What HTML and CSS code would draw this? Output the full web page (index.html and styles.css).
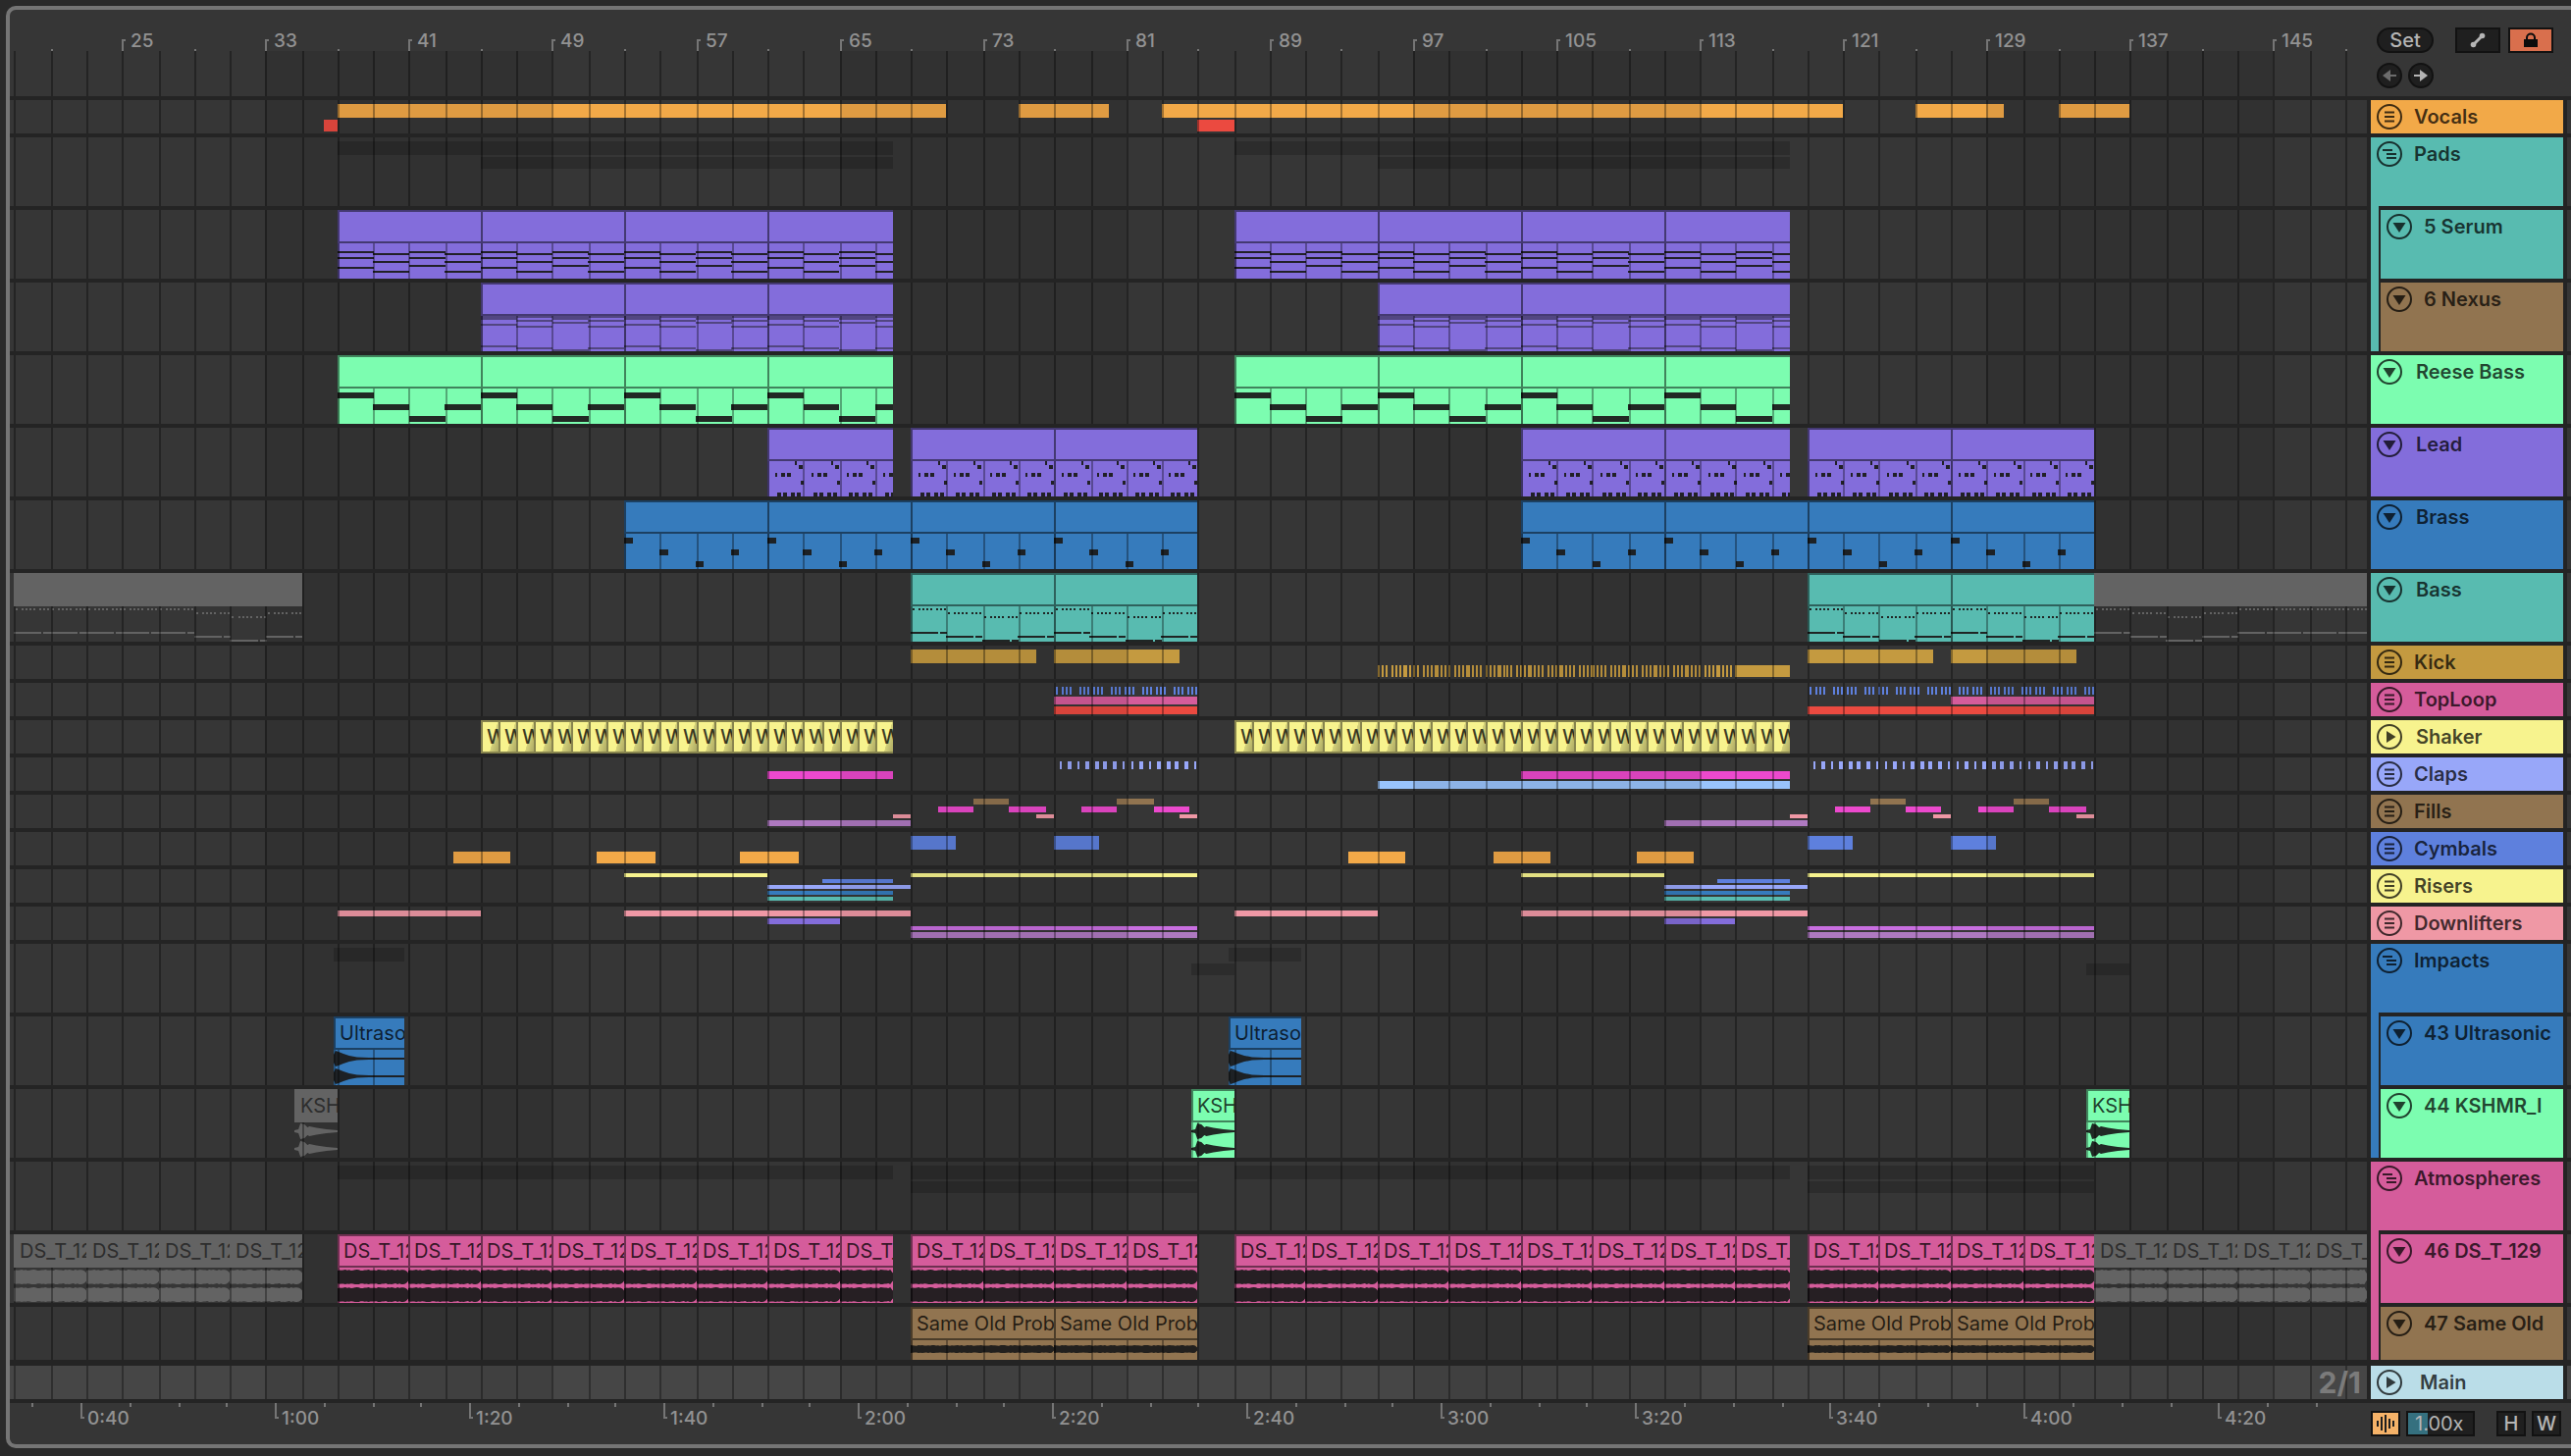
FILE: index.html
```
<!DOCTYPE html>
<html lang="en">
<head>
  <meta charset="UTF-8">
  <meta name="viewport" content="width=device-width, initial-scale=1.0">
  <title>Arrangement View</title>
  <link rel="stylesheet" href="styles.css">
</head>
<body>
  <svg class="symbols" aria-hidden="true">
    <symbol id="i-list" viewBox="0 0 26 26"><path d="M8 8.500h10M8 13h10M8 17.500h10" stroke="currentColor" stroke-width="2"/></symbol>
    <symbol id="i-group" viewBox="0 0 26 26"><path d="M6 9h10M10 13h10M10 17h10" stroke="currentColor" stroke-width="2"/></symbol>
    <symbol id="i-down" viewBox="0 0 26 26"><path d="M6.500 9h13L13 19z" fill="currentColor"/></symbol>
    <symbol id="i-play" viewBox="0 0 26 26"><path d="M10 7v12l9.500-6z" fill="currentColor"/></symbol>
  </svg>

  <main class="panel">
    <section class="timeline">
      <div class="bar-ruler" id="barRuler"></div>
      <div class="stage" id="stage">
        <div class="scrub"></div>
        <div class="sep"></div>
      </div>
      <div class="time-ruler" id="timeRuler"></div>
    </section>

    <aside class="headers">
      <div class="toolbar">
        <div class="tool-row">
          <button class="pill" type="button">Set</button>
          <span class="tool-pair">
            <button class="tool" type="button" aria-label="Automation mode">
              <svg width="16" height="16" viewBox="0 0 16 16"><path d="M4 12l8-8" stroke="currentColor" stroke-width="3"/><circle cx="3.500" cy="12.500" r="2.800" fill="currentColor"/><circle cx="12.500" cy="3.500" r="2.800" fill="currentColor"/></svg>
            </button>
            <button class="tool lock" type="button" aria-label="Lock envelopes">
              <svg width="14" height="16" viewBox="0 0 14 16"><path d="M0 7h14v8H0z" fill="currentColor"/><path d="M3 8V5.500a4 4 0 0 1 8 0V8" fill="none" stroke="currentColor" stroke-width="2"/></svg>
            </button>
          </span>
        </div>
        <div class="tool-row arrows">
          <button class="round off" type="button" aria-label="Previous locator">
            <svg width="22" height="22" viewBox="0 0 22 22"><path d="M4 11l8-6v12z" fill="currentColor"/><path d="M11 11h7" stroke="currentColor" stroke-width="2"/></svg>
          </button>
          <button class="round" type="button" aria-label="Next locator">
            <svg width="22" height="22" viewBox="0 0 22 22"><path d="M18 11l-8-6v12z" fill="currentColor"/><path d="M4 11h7" stroke="currentColor" stroke-width="2"/></svg>
          </button>
        </div>
      </div>

      <div class="track orange"><button class="fold" type="button" aria-label="Unfold Vocals"><svg><use href="#i-list"/></svg></button><span>Vocals</span></div>

      <div class="group teal">
        <div class="track tall teal"><button class="fold" type="button" aria-label="Fold Pads"><svg><use href="#i-group"/></svg></button><span>Pads</span></div>
        <div class="children">
          <div class="track tall teal"><button class="fold" type="button" aria-label="Fold Serum"><svg><use href="#i-down"/></svg></button><span>5 Serum</span></div>
          <div class="track tall brown"><button class="fold" type="button" aria-label="Fold Nexus"><svg><use href="#i-down"/></svg></button><span>6 Nexus</span></div>
        </div>
      </div>

      <div class="track tall green wide"><button class="fold" type="button" aria-label="Fold Reese Bass"><svg><use href="#i-down"/></svg></button><span>Reese Bass</span></div>
      <div class="track tall purple wide"><button class="fold" type="button" aria-label="Fold Lead"><svg><use href="#i-down"/></svg></button><span>Lead</span></div>
      <div class="track tall blue wide"><button class="fold" type="button" aria-label="Fold Brass"><svg><use href="#i-down"/></svg></button><span>Brass</span></div>
      <div class="track tall teal wide"><button class="fold" type="button" aria-label="Fold Bass"><svg><use href="#i-down"/></svg></button><span>Bass</span></div>
      <div class="track gold"><button class="fold" type="button" aria-label="Unfold Kick"><svg><use href="#i-list"/></svg></button><span>Kick</span></div>
      <div class="track pink"><button class="fold" type="button" aria-label="Unfold TopLoop"><svg><use href="#i-list"/></svg></button><span>TopLoop</span></div>
      <div class="track yellow wide"><button class="fold" type="button" aria-label="Unfold Shaker"><svg><use href="#i-play"/></svg></button><span>Shaker</span></div>
      <div class="track peri"><button class="fold" type="button" aria-label="Unfold Claps"><svg><use href="#i-list"/></svg></button><span>Claps</span></div>
      <div class="track brown"><button class="fold" type="button" aria-label="Unfold Fills"><svg><use href="#i-list"/></svg></button><span>Fills</span></div>
      <div class="track royal"><button class="fold" type="button" aria-label="Unfold Cymbals"><svg><use href="#i-list"/></svg></button><span>Cymbals</span></div>
      <div class="track yellow"><button class="fold" type="button" aria-label="Unfold Risers"><svg><use href="#i-list"/></svg></button><span>Risers</span></div>
      <div class="track rose"><button class="fold" type="button" aria-label="Unfold Downlifters"><svg><use href="#i-list"/></svg></button><span>Downlifters</span></div>

      <div class="group blue">
        <div class="track tall blue"><button class="fold" type="button" aria-label="Fold Impacts"><svg><use href="#i-group"/></svg></button><span>Impacts</span></div>
        <div class="children">
          <div class="track tall blue"><button class="fold" type="button" aria-label="Fold Ultrasonic"><svg><use href="#i-down"/></svg></button><span>43 Ultrasonic</span></div>
          <div class="track tall green"><button class="fold" type="button" aria-label="Fold KSHMR"><svg><use href="#i-down"/></svg></button><span>44 KSHMR_I</span></div>
        </div>
      </div>

      <div class="group pink">
        <div class="track tall pink"><button class="fold" type="button" aria-label="Fold Atmospheres"><svg><use href="#i-group"/></svg></button><span>Atmospheres</span></div>
        <div class="children">
          <div class="track tall pink"><button class="fold" type="button" aria-label="Fold DS_T_129"><svg><use href="#i-down"/></svg></button><span>46 DS_T_129</span></div>
          <div class="track mid brown"><button class="fold" type="button" aria-label="Fold Same Old"><svg><use href="#i-down"/></svg></button><span>47 Same Old</span></div>
        </div>
      </div>

      <div class="track master"><button class="fold" type="button" aria-label="Unfold Main"><svg><use href="#i-play"/></svg></button><span>Main</span></div>

      <div class="footer">
        <button class="small wave" type="button" aria-label="Waveform zoom">
          <svg width="20" height="20" viewBox="0 0 20 20"><path d="M2 7v6M6 3v14M10 1v18M14 5v10M18 7v6" stroke="currentColor" stroke-width="2"/></svg>
        </button>
        <input class="zoom" type="text" value="1.00x" aria-label="Vertical zoom">
        <button class="small fit-h" type="button">H</button>
        <button class="small" type="button">W</button>
      </div>
    </aside>

    <div class="edge" id="edge"></div>
  </main>
  <script src="script.js"></script>
</body>
</html>
```
FILE: styles.css
```
* {
  box-sizing: border-box;
}

body {
  margin: 0;
  background: #2a2a2a;
  color: #b5b5b5;
  font-family: Inter, "Liberation Sans", sans-serif;
  font-size: 20px;
  line-height: 26px;
}

button,
input {
  font: inherit;
  color: inherit;
  padding: 0;
  margin: 0;
}

.symbols {
  display: none;
}

.panel {
  display: flex;
  margin: 6px 0 8px 6px;
  border: 4px solid #757575;
  border-right: 0;
  border-radius: 10px 0 0 10px;
  background: #363636;
  overflow: hidden;
}

/* colours */
.orange { --c: #f2a948; }
.red { --c: #eb4a40; }
.teal { --c: #58bbb0; }
.brown { --c: #917450; }
.green { --c: #7cfdb0; }
.purple { --c: #836ddb; }
.blue { --c: #367bbc; }
.gold { --c: #c49a40; }
.pink { --c: #d55c9b; }
.yellow { --c: #f7f38e; }
.peri { --c: #98a7f9; }
.royal { --c: #5e80dd; }
.rose { --c: #ef98a5; }
.magenta { --c: #ec49cd; }
.sky { --c: #99c3fb; }
.mauve { --c: #ae79c0; }
.orchid { --c: #c96fe1; }
.master { --c: #badde8; }

/* timeline */
.timeline {
  flex: 1;
  min-width: 0;
}

.bar-ruler,
.time-ruler {
  position: relative;
  height: 42px;
  overflow: hidden;
  color: #929292;
  font-size: 19px;
  font-weight: 500;
}

.stage {
  position: relative;
  overflow: hidden;
  isolation: isolate;
}

.scrub {
  height: 46px;
}

.sep {
  position: relative;
  z-index: 6;
  height: 4px;
  background: #242424;
}

.sep.thick {
  height: 6px;
}

.lane {
  position: relative;
  height: 34px;
  overflow: hidden;
}

.lane.tall {
  height: 70px;
}

.lane.mid {
  height: 54px;
}

.lane.main {
  display: flex;
  align-items: center;
  justify-content: flex-end;
  padding-right: 6px;
  background: #464646;
}

.lane.main output {
  position: relative;
  z-index: 5;
  font-size: 30px;
  font-weight: 700;
  line-height: 30px;
  color: #7b7b7b;
}

/* everything placed by bar number */
.at {
  position: absolute;
  left: calc((var(--start) - 18.732) / 131.472 * 100%);
  left: round(nearest, calc((var(--start) - 18.732) / 131.472 * 100%), 2px);
}

.span {
  right: calc(100% - (var(--end) - 18.732) / 131.472 * 100%);
  right: calc(100% - round(nearest, calc((var(--end) - 18.732) / 131.472 * 100%), 2px));
}

.line {
  top: 0;
  bottom: 0;
  width: 2px;
  z-index: 3;
  background: rgba(0, 0, 0, 0.33);
}

.shade {
  top: 0;
  bottom: 0;
  z-index: 1;
  background: rgba(0, 0, 0, 0.08);
}

.tick {
  bottom: 0;
  width: 2px;
  height: 2px;
  background: #757575;
}

.tick.major {
  width: 4px;
  height: 12px;
  background: none;
  border-left: 2px solid #757575;
  border-top: 2px solid #757575;
}

.tick span {
  position: absolute;
  left: 7px;
  bottom: -3px;
}

.time-ruler .tick {
  top: 0;
  bottom: auto;
  height: 4px;
}

.time-ruler .tick.major {
  height: 16px;
  border-top: 0;
  border-bottom: 2px solid #757575;
}

.time-ruler .tick span {
  left: 5px;
  top: 3px;
  bottom: auto;
}

/* overview bars of folded tracks */
.mini {
  top: calc(var(--y) * 1px);
  height: calc(var(--h) * 1px);
  background: var(--c);
}

.ghost {
  background: rgba(0, 0, 0, 0.18);
}

.mini-notes {
  display: block;
  width: 100%;
  height: 100%;
  fill: var(--c);
}

.mini.ticks {
  background: none;
}

/* full clips */
.clip-body {
  top: 34px;
  bottom: 0;
  z-index: 2;
  background: var(--c);
  overflow: hidden;
}

.clip-body svg {
  display: block;
  width: 100%;
  height: 100%;
  fill: color-mix(in srgb, var(--c) 6%, #1b1b1b);
}

.clip-body.soft svg {
  fill: #524681;
}

.clip-head {
  top: 0;
  height: 34px;
  z-index: 4;
  overflow: hidden;
  white-space: nowrap;
  padding-left: 4px;
  line-height: 31px;
  color: rgba(0, 0, 0, 0.76);
  background: var(--c);
  border: 2px solid rgba(0, 0, 0, 0.48);
  border-right: 0;
}

.clip-edge {
  top: 34px;
  bottom: 0;
  z-index: 4;
  width: 2px;
  background: rgba(0, 0, 0, 0.3);
}

.clip-head.gray {
  border: 0;
  padding-left: 6px;
  line-height: 35px;
  background: #636363;
  color: #2d2d2d;
}

.clip-body.gray {
  background: none;
}

.clip-body.gray svg {
  fill: #636363;
}

.clip-head.hit {
  padding-left: 4px;
  line-height: 30px;
  font-weight: 500;
  border-color: #87844e;
  background: linear-gradient(105deg, transparent 62%, rgba(0, 0, 0, 0.14) 64%, rgba(0, 0, 0, 0.3)) var(--c);
}

/* track headers */
.headers {
  flex: none;
  width: 204px;
  padding-left: 4px;
  border-right: 4px solid #242424;
  background: #242424;
}

.toolbar {
  height: 88px;
  margin: 0 -4px 4px;
  padding: 18px 14px 0 10px;
  background: #363636;
}

.tool-row,
.tool-pair {
  display: flex;
  justify-content: space-between;
  gap: 8px;
}

.tool-row.arrows {
  justify-content: flex-start;
  gap: 6px;
  margin-top: 10px;
}

.pill,
.tool,
.round,
.small,
.zoom {
  display: flex;
  align-items: center;
  justify-content: center;
  height: 26px;
  border: 2px solid #121212;
  background: #1f1f1f;
  line-height: 22px;
}

.pill {
  width: 58px;
  border-radius: 13px;
  font-weight: 500;
}

.tool {
  width: 46px;
}

.tool.lock {
  background: #d96f4d;
  color: #0c0c0c;
}

.round {
  width: 26px;
  border-radius: 50%;
}

.round svg {
  flex: none;
}

.round.off {
  color: #6c6c6c;
}

.track {
  display: flex;
  align-items: flex-start;
  gap: 12px;
  height: 34px;
  margin-bottom: 4px;
  padding: 4px 0 0 6px;
  overflow: hidden;
  white-space: nowrap;
  background: var(--c);
  color: rgba(0, 0, 0, 0.74);
  font-weight: 600;
}

.track.wide {
  gap: 14px;
}

.track.tall {
  height: 70px;
}

.track.mid {
  height: 54px;
}

.fold {
  flex: none;
  width: 26px;
  height: 26px;
  border: 2px solid currentColor;
  border-radius: 50%;
  background: none;
}

.fold svg {
  display: block;
  width: 26px;
  height: 26px;
  margin: -2px;
}

.group {
  margin-bottom: 4px;
  background: var(--c);
}

.group > .track {
  margin: 0;
}

.children {
  margin-left: 8px;
  padding: 4px 0 0 2px;
  background: #242424;
}

.children .track:last-child {
  margin-bottom: 0;
}

.master {
  margin-top: 6px;
  gap: 18px;
}

.footer {
  display: flex;
  height: 42px;
  margin: 0 -4px;
  padding: 8px 6px 0 4px;
  background: #363636;
}

.small {
  width: 30px;
  margin-left: 6px;
  font-weight: 500;
}

.small.wave {
  margin-left: 0;
  background: #f5b268;
  color: #1f1f1f;
}

.small svg {
  flex: none;
}

.small.fit-h {
  margin-left: auto;
}

.zoom {
  width: 70px;
  margin-left: 6px;
  padding-left: 7px;
  border-radius: 0;
  background: linear-gradient(to right, #35707f 20px, #1f1f1f 20px);
}

.edge {
  flex: none;
  width: 4px;
  padding-top: 88px;
}
```
FILE: script.js
```
const stage = document.getElementById('stage');
const edge = document.getElementById('edge');
const LAST = 150.204; // bar at the right end of the view
const BAR = 18.27;

function el(parent, className, vars, text) {
  const node = document.createElement('div');
  node.className = className;
  for (const key in vars) node.style.setProperty('--' + key, vars[key]);
  if (text) node.textContent = text;
  parent.appendChild(node);
  return node;
}

// splits [from, to] into clips of `len` bars
function split(from, to, len) {
  const out = [];
  for (let b = from; b < to; b += len) out.push([b, Math.min(b + len, to)]);
  return out;
}

function svg(w, h, inner) {
  return `<svg viewBox="0 0 ${w} ${h}" preserveAspectRatio="none">${inner}</svg>`;
}

// ---- notes, one list per two-bar segment: [x, y, w, h] ----
const full = 2 * BAR;
const rows = (ys, h) => ys.map(y => [0, y, full, h]);
const lead = [[28, 0, 2, 4], [32, 4, 4, 4], [8, 12, 2, 4], [14, 12, 4, 4], [20, 12, 4, 4], [34, 20, 3, 4],
  [10, 32, 4, 4], [16, 32, 4, 4], [24, 32, 4, 4], [30, 32, 4, 4]];
const bass = y => [2, 8, 12, 16, 20, 26, 30, 34].map(x => [x, y, 2, 2])
  .concat([[0, y + 24, 28, 2], [30, y + 24, 7, 2]]);

const NOTES = {
  serum: [rows([8, 14, 24], 2), rows([10, 18, 28], 2), rows([8, 14, 22], 2), rows([10, 18, 28], 2)],
  nexus: [rows([0, 2, 8, 30], 2), rows([0, 4, 10, 32], 2), rows([0, 2, 6, 34], 2), rows([0, 4, 10, 32], 2)],
  reese: [rows([4], 6), rows([16], 6), rows([28], 6), rows([16], 6)],
  lead: [lead, lead, lead, lead],
  brass: [[[0, 4, 9, 6]], [[0, 16, 9, 6]], [[0, 28, 8, 6]], [[0, 16, 8, 6]]],
  bass: [bass(2), bass(6), bass(10), bass(6)],
  bassIntro: [bass(2), bass(2), bass(2), bass(2), bass(2), bass(6), bass(10), bass(6)],
  bassOutro: [bass(2), bass(6), bass(10), bass(6), bass(2), bass(2), bass(2), bass(2)]
};

function notes(kind, start, end) {
  const segs = NOTES[kind];
  let inner = '';
  for (let i = 0; i * 2 < end - start; i++) {
    for (const [x, y, w, h] of segs[i % segs.length]) {
      inner += `<rect x="${(i * full + x).toFixed(1)}" y="${y}" width="${w}" height="${h}"/>`;
    }
  }
  return svg((end - start) * BAR, 36, `<g shape-rendering="crispEdges">${inner}</g>`);
}

// ---- audio shapes ----
function band(mid, amp, w, jitter, seed) {
  let top = '', bottom = '';
  for (let x = 0; x <= w + 2; x += 2) {
    const fade = Math.max(0.4, Math.min(1, (w - x) / 3 + 0.4));
    const n = Math.abs(Math.sin(x * 0.9 + seed) + Math.sin(x * 0.37 + seed * 2)) * jitter;
    top += `${x},${(mid - (amp - n) * fade).toFixed(1)} `;
    bottom = `${x},${(mid + (amp - n * 0.8) * fade).toFixed(1)} ` + bottom;
  }
  return `<polygon points="${top}${bottom}"/>`;
}

function decay(mid, points) {
  const up = points.map(([x, a]) => `${x},${mid - a}`).join(' ');
  const down = points.slice().reverse().map(([x, a]) => `${x},${mid + a}`).join(' ');
  return `<polygon points="${up} ${down}"/>`;
}

const WAVES = {
  drone: w => svg(w, 36, band(9.500, 7.500, w, 0.6, 1) + band(27.500, 7.500, w, 0.6, 1)),
  old: w => svg(w, 20, band(9, 4, w, 0.4, 3)),
  sonic: w => {
    const p = [[0, 4], [2, 8], [5, 7], [10, 5], [16, 3], [24, 1.5], [36, 1], [w, 1]];
    return svg(w, 36, decay(9, p) + decay(27, p));
  },
  kshmr: w => {
    const p = [[0, 1], [4, 2], [6, 8], [10, 7], [13, 4], [15, 5], [22, 3.5], [32, 2], [w, 1]];
    return svg(w, 36, decay(9, p) + decay(27, p));
  }
};

function clip(lane, color, [start, end], kind, title) {
  const pos = { start, end };
  const body = el(lane, `at span clip-body ${color}${kind === 'nexus' ? ' soft' : ''}`, pos);
  body.innerHTML = NOTES[kind] ? notes(kind, start, end) : WAVES[kind]((end - start) * BAR);
  el(lane, `at span clip-head ${color}`, pos, title);
  if (color !== 'gray') el(lane, 'at clip-edge', { start });
}

function mini(lane, color, y, h, ranges) {
  for (const [start, end] of ranges) el(lane, `at span mini ${color}`, { start, end, y, h });
}

// short repeated hits drawn inside one range, pattern in pixels
function hits(lane, color, y, h, [start, end], period, pattern) {
  const w = (end - start) * BAR;
  let inner = '';
  for (let x = 0; x < w; x += period) {
    for (const [dx, dw] of pattern) inner += `<rect x="${x + dx}" y="0" width="${dw}" height="1"/>`;
  }
  const node = el(lane, `at span mini ticks ${color}`, { start, end, y, h });
  node.innerHTML = `<svg class="mini-notes" viewBox="0 0 ${w} 1" preserveAspectRatio="none" shape-rendering="crispEdges">${inner}</svg>`;
}

const kickHits = [[0, 2], [4, 2], [8, 2], [14, 2], [18, 2], [22, 2], [26, 4]];
const topHits = [[2, 2], [8, 2], [12, 2], [16, 2], [26, 2], [30, 2]];
const clapHits = [[6, 2], [14, 4], [24, 2], [32, 4], [42, 4], [50, 4], [60, 4], [70, 2]];

const LANES = [
  ['', lane => { // Vocals
    mini(lane, 'orange', 4, 14, [[37, 71], [75, 80], [83, 121], [125, 130], [133, 137]]);
    mini(lane, 'red', 20, 12, [[36.200, 37], [85, 87]]);
  }],
  ['tall', lane => { // Pads
    mini(lane, 'ghost', 4, 14, [[37, 68], [87, 118]]);
    mini(lane, 'ghost', 20, 12, [[45, 68], [95, 118]]);
  }],
  ['tall', lane => [...split(37, 68, 8), ...split(87, 118, 8)].forEach(r => clip(lane, 'purple', r, 'serum'))],
  ['tall', lane => [...split(45, 68, 8), ...split(95, 118, 8)].forEach(r => clip(lane, 'purple', r, 'nexus'))],
  ['tall', lane => [...split(37, 68, 8), ...split(87, 118, 8)].forEach(r => clip(lane, 'green', r, 'reese'))],
  ['tall', lane => [[61, 68], ...split(69, 85, 8), ...split(103, 118, 8), ...split(119, 135, 8)]
    .forEach(r => clip(lane, 'purple', r, 'lead'))],
  ['tall', lane => [...split(53, 85, 8), ...split(103, 135, 8)].forEach(r => clip(lane, 'blue', r, 'brass'))],
  ['tall', lane => { // Bass
    clip(lane, 'gray', [19, 35], 'bassIntro');
    [...split(69, 85, 8), ...split(119, 135, 8)].forEach(r => clip(lane, 'teal', r, 'bass'));
    clip(lane, 'gray', [135, LAST], 'bassOutro');
  }],
  ['', lane => { // Kick
    mini(lane, 'gold', 4, 14, [[69, 76], [77, 84], [119, 126], [127, 134]]);
    hits(lane, 'gold', 20, 12, [95, 115], 32, kickHits);
    mini(lane, 'gold', 20, 12, [[115, 118]]);
  }],
  ['', lane => { // TopLoop
    hits(lane, 'royal', 4, 8, [77, 85], 32, topHits);
    hits(lane, 'royal', 4, 8, [119, 135], 32, topHits);
    mini(lane, 'pink', 14, 8, [[77, 85], [127, 135]]);
    mini(lane, 'red', 24, 8, [[77, 85], [119, 135]]);
  }],
  ['', lane => [...split(45, 68, 1), ...split(87, 118, 1)] // Shaker
    .forEach(([start, end]) => el(lane, 'at span clip-head hit yellow', { start, end }, 'W'))],
  ['', lane => { // Claps
    hits(lane, 'peri', 4, 8, [77, 85], 73, clapHits);
    hits(lane, 'peri', 4, 8, [119, 135], 73, clapHits);
    mini(lane, 'magenta', 14, 8, [[61, 68], [103, 118]]);
    mini(lane, 'sky', 24, 8, [[95, 118]]);
  }],
  ['', lane => { // Fills
    for (const b of [69, 77, 119, 127]) {
      mini(lane, 'magenta', 12, 6, [[b + 1.500, b + 3.500], [b + 5.500, b + 7.500]]);
      mini(lane, 'brown', 4, 6, [[b + 3.500, b + 5.500]]);
      mini(lane, 'rose', 20, 4, [[b + 7, b + 8]]);
    }
    mini(lane, 'rose', 20, 4, [[68, 69], [118, 119]]);
    mini(lane, 'mauve', 26, 6, [[61, 69], [111, 119]]);
  }],
  ['', lane => { // Cymbals
    mini(lane, 'royal', 4, 14, [[69, 71.500], [77, 79.500], [119, 121.500], [127, 129.500]]);
    mini(lane, 'orange', 20, 12, [43.500, 51.500, 59.500, 93.400, 101.500, 109.500].map(b => [b, b + 3.200]));
  }],
  ['', lane => { // Risers
    mini(lane, 'yellow', 4, 4, [[53, 61], [69, 85], [103, 111], [119, 135]]);
    mini(lane, 'royal', 10, 4, [[64, 68], [114, 118]]);
    mini(lane, 'peri', 16, 4, [[61, 69], [111, 119]]);
    mini(lane, 'blue', 22, 4, [[61, 68], [111, 118]]);
    mini(lane, 'teal', 28, 4, [[61, 68], [111, 118]]);
  }],
  ['', lane => { // Downlifters
    mini(lane, 'rose', 4, 6, [[37, 45], [53, 69], [87, 95], [103, 119]]);
    mini(lane, 'purple', 12, 6, [[61, 65], [111, 115]]);
    mini(lane, 'orchid', 20, 4, [[69, 85], [119, 135]]);
    mini(lane, 'mauve', 26, 6, [[69, 85], [119, 135]]);
  }],
  ['tall', lane => { // Impacts
    mini(lane, 'ghost', 4, 14, [[36.780, 40.750], [86.700, 90.750]]);
    mini(lane, 'ghost', 20, 12, [[84.600, 87], [134.600, 137]]);
  }],
  ['tall', lane => [[36.780, 40.750], [86.700, 90.750]].forEach(r => clip(lane, 'blue', r, 'sonic', 'Ultrasonic'))],
  ['tall', lane => {
    clip(lane, 'gray', [34.650, 37], 'kshmr', 'KSHMR');
    clip(lane, 'green', [84.650, 87], 'kshmr', 'KSHMR');
    clip(lane, 'green', [134.600, 137], 'kshmr', 'KSHMR');
  }],
  ['tall', lane => { // Atmospheres
    mini(lane, 'ghost', 4, 14, [[37, 68], [69, 85], [87, 118], [119, 135]]);
    mini(lane, 'ghost', 20, 12, [[69, 85], [119, 135]]);
  }],
  ['tall', lane => {
    split(19, 35, 4).forEach(r => clip(lane, 'gray', r, 'drone', 'DS_T_129'));
    [...split(37, 68, 4), ...split(69, 85, 4), ...split(87, 118, 4), ...split(119, 135, 4)]
      .forEach(r => clip(lane, 'pink', r, 'drone', 'DS_T_129'));
    split(135, LAST, 4).forEach(r => clip(lane, 'gray', r, 'drone', 'DS_T_129'));
  }],
  ['mid', lane => [...split(69, 85, 8), ...split(119, 135, 8)]
    .forEach(r => clip(lane, 'brown', r, 'old', 'Same Old Prob'))],
  ['main', lane => {
    lane.innerHTML = '<output>2/1</output>';
  }]
];

el(edge, 'sep');
LANES.forEach(([size, draw], i) => {
  const sep = i === LANES.length - 2 ? 'sep thick' : 'sep';
  draw(el(stage, 'lane ' + size));
  el(stage, sep);
  el(edge, 'lane ' + size);
  el(edge, sep);
});

// grid and the alternating 16 bar shading
for (let b = 19; b < LAST; b += 2) el(stage, 'at line', { start: b });
for (const b of [33, 65, 97, 129]) el(stage, 'at span shade', { start: b, end: Math.min(b + 16, 152) });

// rulers
const barRuler = document.getElementById('barRuler');
for (let b = 21; b < LAST; b += 4) {
  const major = (b - 1) % 8 === 0;
  const tick = el(barRuler, 'at tick' + (major ? ' major' : ''), { start: b });
  if (major) tick.innerHTML = `<span>${b}</span>`;
}

const timeRuler = document.getElementById('timeRuler');
for (let s = 35; s < 275; s += 5) {
  const major = s % 20 === 0;
  const start = 22.680 + (s - 40) * 0.542;
  const tick = el(timeRuler, 'at tick' + (major ? ' major' : ''), { start });
  if (major) tick.innerHTML = `<span>${Math.floor(s / 60)}:${String(s % 60).padStart(2, '0')}</span>`;
}
```
